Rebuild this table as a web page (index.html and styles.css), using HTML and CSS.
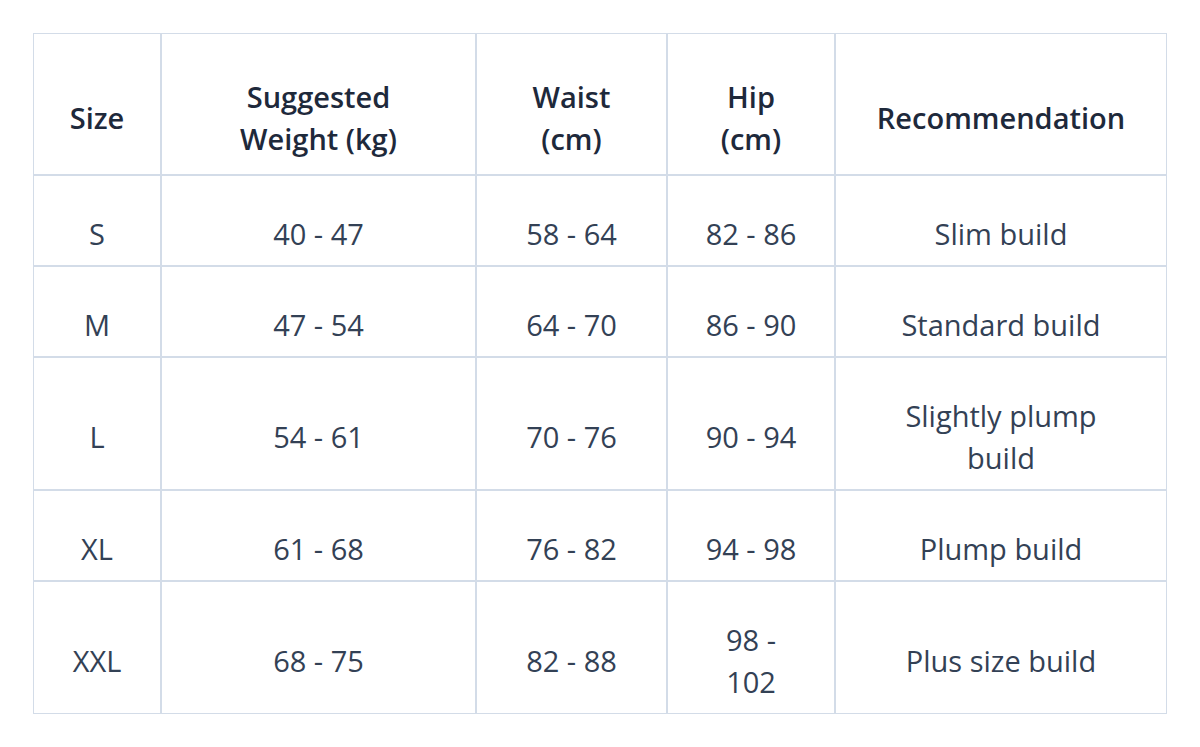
FILE: index.html
```html
<!DOCTYPE html>
<html>
<head>
<meta charset="utf-8">
<link rel="stylesheet" href="styles.css">
</head>
<body>
<table class="size-table">
  <colgroup>
    <col class="c1"><col class="c2"><col class="c3"><col class="c4"><col class="c5">
  </colgroup>
  <thead>
    <tr>
      <th>Size</th>
      <th>Suggested<br>Weight (kg)</th>
      <th>Waist<br>(cm)</th>
      <th>Hip<br>(cm)</th>
      <th>Recommendation</th>
    </tr>
  </thead>
  <tbody>
    <tr><td>S</td><td>40 - 47</td><td>58 - 64</td><td>82 - 86</td><td>Slim build</td></tr>
    <tr><td>M</td><td>47 - 54</td><td>64 - 70</td><td>86 - 90</td><td>Standard build</td></tr>
    <tr><td>L</td><td>54 - 61</td><td>70 - 76</td><td>90 - 94</td><td>Slightly plump<br>build</td></tr>
    <tr><td>XL</td><td>61 - 68</td><td>76 - 82</td><td>94 - 98</td><td>Plump build</td></tr>
    <tr><td>XXL</td><td>68 - 75</td><td>82 - 88</td><td>98 -<br>102</td><td>Plus size build</td></tr>
  </tbody>
</table>
</body>
</html>
```
FILE: styles.css
```css
html, body {
  margin: 0;
  padding: 0;
  background: #ffffff;
}
body {
  padding: 33px;
  font-family: "Open Sans", "Noto Sans", sans-serif;
}
.size-table {
  width: 1134px;
  border-collapse: separate;
  border-spacing: 0;
  table-layout: fixed;
}
.c1 { width: 128px; }
.c2 { width: 315px; }
.c3 { width: 191px; }
.c4 { width: 168px; }
.c5 { width: 332px; }
.size-table th,
.size-table td {
  border: 1px solid #d3dce8;
  text-align: center;
  vertical-align: middle;
  font-size: 29px;
  line-height: 42px;
}
.size-table th {
  padding: 42px 10px 14px;
  font-weight: 600;
  color: #1e293b;
}
.size-table td {
  padding: 37px 10px 10px;
  font-weight: 400;
  color: #334155;
}
```
